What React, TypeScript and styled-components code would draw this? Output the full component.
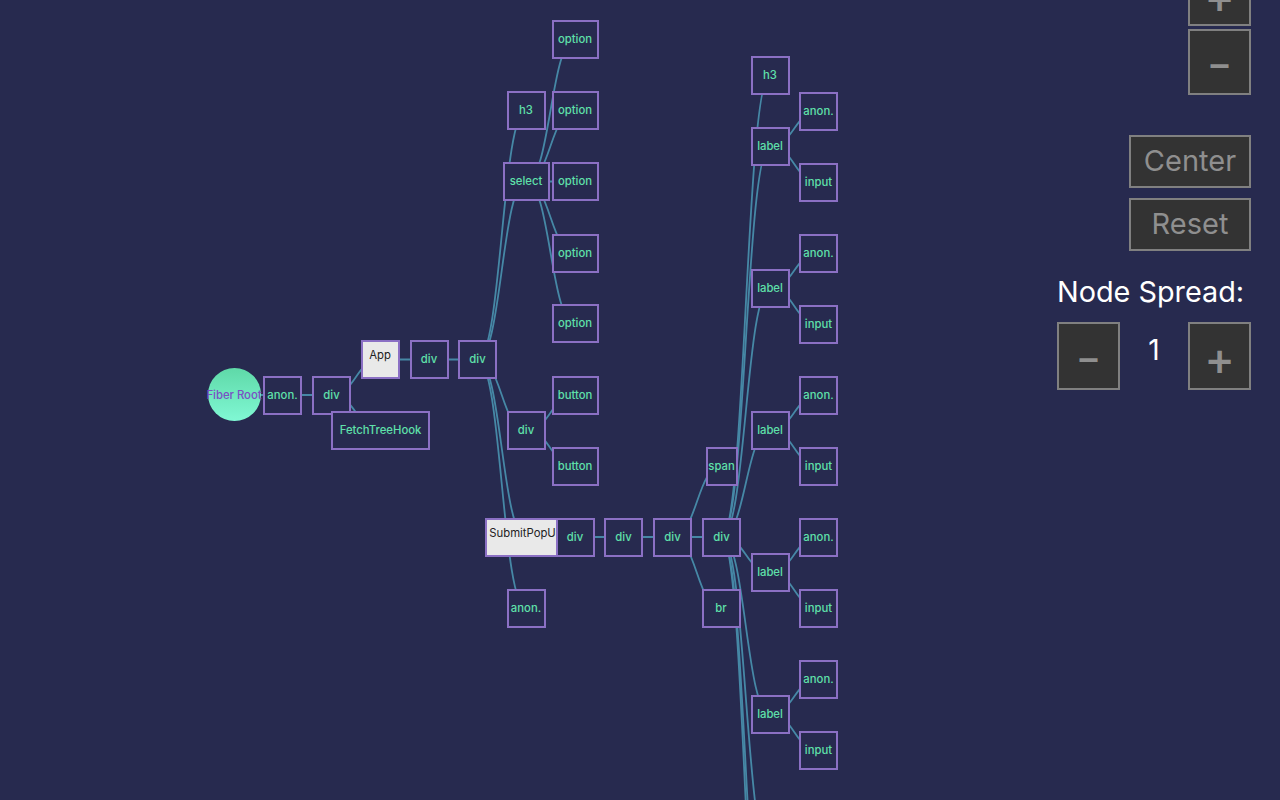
import React from 'react';
import styled, { createGlobalStyle } from 'styled-components';

const GlobalStyle = createGlobalStyle`
  html, body { margin: 0; padding: 0; height: 100%; background: #272a4f; }
  #root { height: 100%; }
`;

const Canvas = styled.div`
  position: relative;
  width: 1280px;
  height: 800px;
  overflow: hidden;
  background: #272a4f;
  font-family: Inter, "Liberation Sans", sans-serif;
`;

const Links = styled.svg`
  position: absolute;
  inset: 0;
`;

const Link = styled.path`
  fill: none;
  stroke: #4688a6;
  stroke-width: 1.8;
`;

const NodeBox = styled.div<{ $light?: boolean }>`
  position: absolute;
  box-sizing: border-box;
  height: 39px;
  border: 2px solid #8b70c4;
  background: ${p => (p.$light ? '#e9e9e9' : '#272a4f')};
  color: ${p => (p.$light ? '#222222' : '#5fe0aa')};
  font-size: 11.3px;
  font-weight: ${p => (p.$light ? 400 : 500)};
  line-height: 1;
  white-space: nowrap;
  overflow: hidden;
  display: flex;
  align-items: center;
  justify-content: center;
  padding: ${p => (p.$light ? '0 0 7px' : '1px 0 0')};
`;

const RootCircle = styled.div`
  position: absolute;
  left: 207.5px;
  top: 368px;
  width: 53px;
  height: 53px;
  border-radius: 50%;
  background: linear-gradient(180deg, #5fd9a8 0%, #80f8d4 100%);
  color: #7a4fc4;
  font-size: 11.3px;
  font-weight: 500;
  display: flex;
  align-items: center;
  justify-content: center;
  white-space: nowrap;
`;

const Panel = styled.div`
  position: absolute;
  top: -40px;
  right: 29px;
  width: 194px;
  display: flex;
  flex-direction: column;
  align-items: flex-end;
  font-family: Inter, "Liberation Sans", sans-serif;
`;

const ControlButton = styled.button`
  box-sizing: border-box;
  margin: 0;
  padding: 0;
  border: 2px solid #808080;
  background: #333333;
  color: #8f8f8f;
  font-family: inherit;
  display: flex;
  align-items: center;
  justify-content: center;
`;

const SquareButton = styled(ControlButton)<{ $tall?: boolean; $nudge?: number }>`
  width: 63px;
  height: ${p => (p.$tall ? '68px' : '66px')};
  padding-top: ${p => p.$nudge ?? 4}px;
  line-height: 1;
  font-weight: 600;
`;

const MinusButton = styled(SquareButton)`
  font-size: 36px;
`;

const PlusButton = styled(SquareButton)`
  font-size: 46px;
  font-weight: 500;
`;

const WideButton = styled(ControlButton)`
  width: 122px;
  height: 53px;
  font-size: 29px;
  padding-bottom: 2px;
`;

const ZoomStack = styled.div`
  display: flex;
  flex-direction: column;
  gap: 3px;
  margin-bottom: 40px;
`;

const ActionStack = styled.div`
  display: flex;
  flex-direction: column;
  gap: 10px;
`;

const SpreadLabel = styled.div`
  align-self: stretch;
  color: #ffffff;
  font-size: 28.8px;
  line-height: 32px;
  margin: 25px 0 14px;
  white-space: nowrap;
`;

const SpreadRow = styled.div`
  align-self: stretch;
  display: flex;
  justify-content: space-between;
`;

const SpreadValue = styled.div`
  flex: 1;
  color: #ffffff;
  font-size: 28px;
  line-height: 56px;
  text-align: center;
`;

type TreeNode = { id: string; t: string; x: number; y: number; w: number; light?: boolean; p: string };

// x and y are node centres; `w` is the box width; `p` is the parent node id
const nodes: TreeNode[] = [
  { id: 'anon0', t: 'anon.', x: 282.5, y: 395, w: 39, p: 'root' },
  { id: 'div0', t: 'div', x: 331.5, y: 395, w: 39, p: 'anon0' },
  { id: 'app', t: 'App', x: 380, y: 359.5, w: 39, light: true, p: 'div0' },
  { id: 'div1', t: 'div', x: 429, y: 359.5, w: 39, p: 'app' },
  { id: 'div2', t: 'div', x: 477.5, y: 359.5, w: 39, p: 'div1' },
  { id: 'h3a', t: 'h3', x: 526, y: 110.5, w: 39, p: 'div2' },
  { id: 'opt1', t: 'option', x: 575, y: 39.5, w: 47, p: 'sel' },
  { id: 'opt2', t: 'option', x: 575, y: 110.5, w: 47, p: 'sel' },
  { id: 'opt3', t: 'option', x: 575, y: 181.5, w: 47, p: 'sel' },
  { id: 'opt4', t: 'option', x: 575, y: 253, w: 47, p: 'sel' },
  { id: 'opt5', t: 'option', x: 575, y: 323.5, w: 47, p: 'sel' },
  { id: 'sel', t: 'select', x: 526, y: 181.5, w: 47, p: 'div2' },
  { id: 'div3', t: 'div', x: 526, y: 430.5, w: 39, p: 'div2' },
  { id: 'btn1', t: 'button', x: 575, y: 395, w: 47, p: 'div3' },
  { id: 'btn2', t: 'button', x: 575, y: 466, w: 47, p: 'div3' },
  { id: 'sub', t: 'SubmitPopUp', x: 526, y: 537, w: 83, light: true, p: 'div2' },
  { id: 'anon1', t: 'anon.', x: 526, y: 608, w: 39, p: 'div2' },
  { id: 'div4', t: 'div', x: 575, y: 537, w: 39, p: 'sub' },
  { id: 'div5', t: 'div', x: 623.5, y: 537, w: 39, p: 'div4' },
  { id: 'div6', t: 'div', x: 672.5, y: 537, w: 39, p: 'div5' },
  { id: 'span', t: 'span', x: 721.5, y: 466, w: 32, p: 'div6' },
  { id: 'div7', t: 'div', x: 721.5, y: 537, w: 39, p: 'div6' },
  { id: 'br', t: 'br', x: 721, y: 608, w: 39, p: 'div6' },
  { id: 'h3b', t: 'h3', x: 770, y: 75, w: 39, p: 'div7' },
];

[146, 288, 430, 572, 714, 856, 998, 1069].forEach((y, i) => {
  const id = `label${i}`;
  nodes.push({ id, t: 'label', x: 770, y, w: 39, p: 'div7' });
  nodes.push({ id: `${id}a`, t: 'anon.', x: 818.5, y: y - 35, w: 39, p: id });
  nodes.push({ id: `${id}b`, t: 'input', x: 818.5, y: y + 36, w: 39, p: id });
});

nodes.push({ id: 'hook', t: 'FetchTreeHook', x: 380.5, y: 430, w: 99, p: 'div0' });

const centres: Record<string, { x: number; y: number }> = { root: { x: 234, y: 395 } };
nodes.forEach(n => { centres[n.id] = { x: n.x, y: n.y }; });

const linkPath = (a: { x: number; y: number }, b: { x: number; y: number }) => {
  const mx = (a.x + b.x) / 2;
  return `M${a.x},${a.y}C${mx},${a.y} ${mx},${b.y} ${b.x},${b.y}`;
};

// The SubmitPopUp box is anchored so that its tail runs under its child
const boxLeft = (n: TreeNode) => (n.id === 'sub' ? 484.5 : n.x - n.w / 2);

const onScreen = nodes.filter(n => n.y + 19.5 <= 800);

export default function App() {
  return (
    <Canvas>
      <GlobalStyle />
      <Links width={1280} height={800} viewBox="0 0 1280 800">
        {nodes.map(n => (
          <Link key={n.id} d={linkPath(centres[n.p], n)} />
        ))}
      </Links>
      <RootCircle>Fiber Root</RootCircle>
      {onScreen.map(n => (
        <NodeBox
          key={n.id}
          $light={n.light}
          style={{ left: boxLeft(n), top: n.y - 19.5, width: n.w }}
        >
          {n.t}
        </NodeBox>
      ))}
      <Panel>
        <ZoomStack>
          <PlusButton $nudge={6}>+</PlusButton>
          <MinusButton>–</MinusButton>
        </ZoomStack>
        <ActionStack>
          <WideButton>Center</WideButton>
          <WideButton>Reset</WideButton>
        </ActionStack>
        <SpreadLabel>Node Spread:</SpreadLabel>
        <SpreadRow>
          <MinusButton $tall>–</MinusButton>
          <SpreadValue>1</SpreadValue>
          <PlusButton $tall>+</PlusButton>
        </SpreadRow>
      </Panel>
    </Canvas>
  );
}
